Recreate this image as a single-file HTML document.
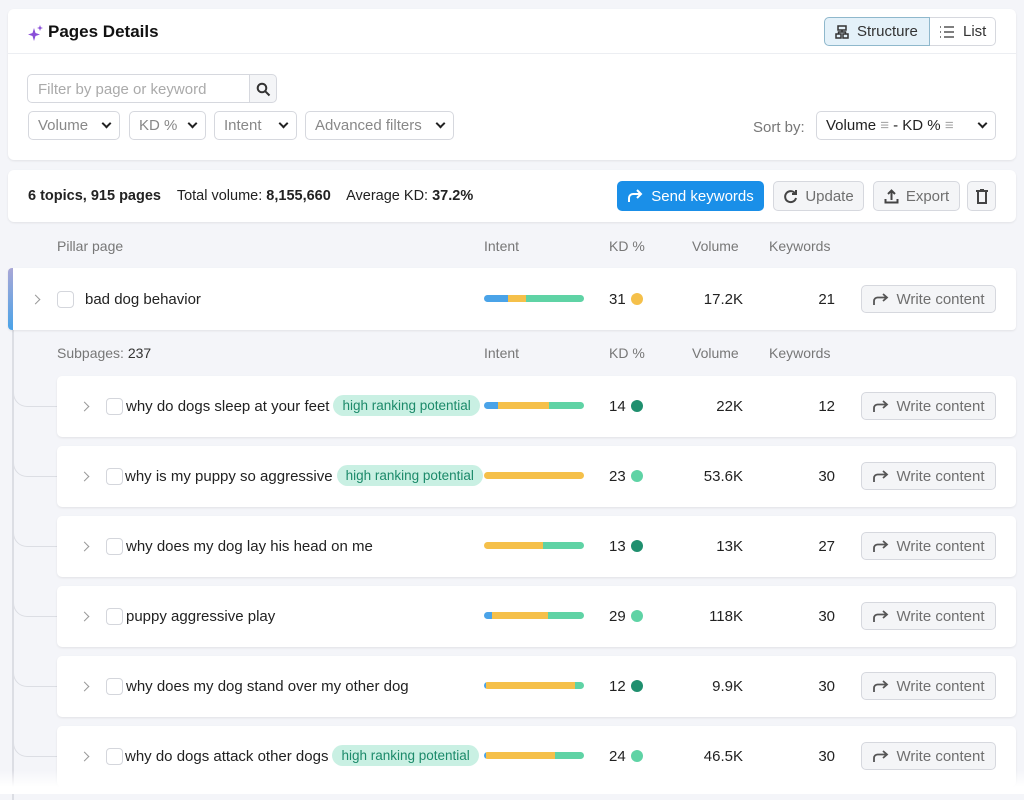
<!DOCTYPE html>
<html><head><meta charset="utf-8"><style>
*{box-sizing:border-box;margin:0;padding:0}
body{width:1024px;height:794px;background:#f4f5f9;font-family:"Liberation Sans",sans-serif;color:#222;position:relative;overflow:hidden;font-size:14px}
.a{position:absolute}
.card{position:absolute;background:#fff;border-radius:6px;box-shadow:0 1px 2px rgba(0,0,0,.08)}
.btn{position:absolute;border:1px solid #d6d8de;border-radius:5px;background:#fff;color:#888;font-size:15px;display:flex;align-items:center;padding:0 9px}
.gbtn{position:absolute;border:1px solid #d6d8de;border-radius:5px;background:#f4f5f7;color:#6f6f6f;font-size:15px;display:flex;align-items:center;justify-content:center;gap:7px}
.chev{width:7px;height:7px;border-right:2px solid #222;border-bottom:2px solid #222;transform:rotate(45deg);margin-left:auto;margin-top:-4px}
.hd{position:absolute;color:#777;font-size:14px}
.row{position:absolute;left:57px;width:959px;height:61px;background:#fff;border-radius:5px;box-shadow:0 1px 2px rgba(0,0,0,.08)}
.arrow{position:absolute;width:7px;height:7px;border-right:1.5px solid #999;border-top:1.5px solid #999;transform:rotate(45deg)}
.cb{position:absolute;width:17px;height:17px;border:1px solid #d4d6dc;border-radius:4px;background:#fff}
.t{position:absolute;font-size:15px;color:#222;white-space:nowrap}
.tag{background:#c9f0e3;color:#1c8a6a;font-size:13.5px;border-radius:11px;padding:3px 9px;margin-left:4px;vertical-align:1px}
.bar{position:absolute;left:427px;width:100px;height:7px;border-radius:4px;overflow:hidden;display:flex}
.bar i{display:block;height:100%}
.b{background:#4aa3e8}.y{background:#f5c04a}.g{background:#5fd3a5}
.kd{position:absolute;left:552px;font-size:15px}
.dot{position:absolute;left:574px;top:24px;width:12px;height:12px;border-radius:50%}
.vol{position:absolute;right:273px;font-size:15px;text-align:right}
.kw{position:absolute;right:181px;font-size:15px}
.conn{position:absolute;left:13px;width:44px;height:30px;border-left:1.5px solid #dcdee4;border-bottom:1.5px solid #dcdee4;border-bottom-left-radius:14px}
</style></head><body>

<div class="card" style="left:8px;top:9px;width:1008px;height:151px">
  <div class="a" style="left:0;top:44px;width:1008px;height:1px;background:#eceef2"></div>
  <svg class="a" style="left:19px;top:15px" width="18" height="18" viewBox="0 0 18 18"><path d="M7 4 L8.5 9 L13 10.5 L8.5 12 L7 17 L5.5 12 L1 10.5 L5.5 9 Z" fill="#8a4fd8"/><path d="M13 1 L13.8 3.2 L16 4 L13.8 4.8 L13 7 L12.2 4.8 L10 4 L12.2 3.2Z" fill="#8a4fd8"/></svg>
  <div class="a" style="left:40px;top:13px;font-size:17px;font-weight:bold;color:#111">Pages Details</div>
  <div class="a" style="left:816px;top:8px;width:106px;height:29px;background:#e4f1f9;border:1px solid #8fb8cc;border-radius:5px 0 0 5px;display:flex;align-items:center;padding-left:10px;gap:8px;font-size:15px;color:#333">
    <svg width="14" height="14" viewBox="0 0 14 14" fill="none" stroke="#333" stroke-width="1.5"><rect x="3" y="1" width="8" height="4"/><rect x="1" y="9" width="5" height="4"/><rect x="8" y="9" width="5" height="4"/><path d="M7 5v2M3.5 9V7h7v2"/></svg>Structure</div>
  <div class="a" style="left:922px;top:8px;width:66px;height:29px;border:1px solid #d6d8de;border-left:none;border-radius:0 5px 5px 0;display:flex;align-items:center;padding-left:9px;gap:8px;font-size:15px;color:#333">
    <svg width="16" height="12" viewBox="0 0 16 12" stroke="#555" stroke-width="1.4"><path d="M1 1h1M1 6h1M1 11h1M5 1h10M5 6h10M5 11h10"/></svg>List</div>
  <div class="a" style="left:19px;top:65px;width:223px;height:29px;border:1px solid #d6d8de;border-radius:5px 0 0 5px;color:#aaa;font-size:15px;padding:6px 10px">Filter by page or keyword</div>
  <div class="a" style="left:241px;top:65px;width:28px;height:29px;border:1px solid #d6d8de;border-radius:0 5px 5px 0;background:#f4f5f7"><svg style="margin:7px 0 0 6px" width="15" height="15" viewBox="0 0 15 15" fill="none" stroke="#333" stroke-width="2"><circle cx="6" cy="6" r="4.3"/><path d="M9.3 9.3L13.5 13.5"/></svg></div>
  <div class="btn" style="left:20px;top:102px;width:92px;height:29px">Volume<span class="chev"></span></div>
  <div class="btn" style="left:121px;top:102px;width:77px;height:29px">KD %<span class="chev"></span></div>
  <div class="btn" style="left:206px;top:102px;width:83px;height:29px">Intent<span class="chev"></span></div>
  <div class="btn" style="left:297px;top:102px;width:149px;height:29px">Advanced filters<span class="chev"></span></div>
  <div class="a" style="left:745px;top:110px;color:#777;font-size:15px">Sort by:</div>
  <div class="btn" style="left:808px;top:102px;width:180px;height:29px;color:#222">Volume&nbsp;<span style="color:#aaa">&#8801;</span>&nbsp;- KD %&nbsp;<span style="color:#aaa">&#8801;</span><span class="chev"></span></div>
</div>

<div class="card" style="left:8px;top:170px;width:1008px;height:52px">
  <div class="a" style="left:20px;top:18px;font-size:14.5px;white-space:nowrap"><b>6 topics, 915 pages</b>&nbsp;&nbsp;&nbsp; Total volume: <b>8,155,660</b>&nbsp;&nbsp;&nbsp; Average KD: <b>37.2%</b></div>
  <div class="a" style="left:609px;top:11px;width:147px;height:30px;background:#1a8fe8;border-radius:5px;color:#fff;font-size:15px;display:flex;align-items:center;justify-content:center;gap:8px"><svg width="16" height="14" viewBox="0 0 16 14" fill="none" stroke="#fff" stroke-width="2"><path d="M2 13V9a4 4 0 0 1 4-4h8M10 1l4 4-4 4"/></svg>Send keywords</div>
  <div class="gbtn" style="left:765px;top:11px;width:91px;height:30px"><svg width="15" height="15" viewBox="0 0 15 15" fill="none" stroke="#444" stroke-width="2"><path d="M12.5 5A5.5 5.5 0 1 0 13 9"/><path d="M13 1v4H9"/></svg>Update</div>
  <div class="gbtn" style="left:865px;top:11px;width:87px;height:30px"><svg width="15" height="15" viewBox="0 0 15 15" fill="none" stroke="#444" stroke-width="2"><path d="M7.5 11V2M4 5l3.5-3.5L11 5M1.5 10v3.5h12V10"/></svg>Export</div>
  <div class="gbtn" style="left:959px;top:11px;width:29px;height:30px"><svg width="12" height="15" viewBox="0 0 12 15" fill="none" stroke="#444" stroke-width="2"><path d="M0 2h12M4 1h4M2 3v11h8V3"/></svg></div>
</div>

<div class="hd" style="left:57px;top:238px">Pillar page</div>
<div class="hd" style="left:484px;top:238px">Intent</div>
<div class="hd" style="left:609px;top:238px">KD %</div>
<div class="hd" style="left:692px;top:238px">Volume</div>
<div class="hd" style="left:769px;top:238px">Keywords</div>

<div class="a" style="left:12px;top:330px;width:1.5px;height:470px;background:#dcdee4"></div>
<div class="conn" style="top:377px"></div>
<div class="conn" style="top:447px"></div>
<div class="conn" style="top:517px"></div>
<div class="conn" style="top:587px"></div>
<div class="conn" style="top:657px"></div>
<div class="conn" style="top:727px"></div>

<div class="card" style="left:8px;top:268px;width:1008px;height:62px;border-radius:4px;overflow:hidden">
  <div class="a" style="left:0;top:0;width:5px;height:62px;background:linear-gradient(#a9a7d6,#4aa3e8)"></div>
  <div class="arrow" style="left:24px;top:28px"></div>
  <div class="cb" style="left:49px;top:23px"></div>
  <div class="t" style="left:77px;top:23px">bad dog behavior</div>
  <div class="bar" style="left:476px;top:27px"><i class="b" style="width:24px"></i><i class="y" style="width:18px"></i><i class="g" style="flex:1"></i></div>
  <div class="kd" style="left:601px;top:23px">31</div><div class="dot" style="left:623px;top:25px;background:#f5c04a"></div>
  <div class="a" style="right:273px;top:23px;font-size:15px">17.2K</div>
  <div class="a" style="right:181px;top:23px;font-size:15px">21</div>
  <div class="gbtn" style="left:853px;top:17px;width:135px;height:28px"><svg width="17" height="13" viewBox="0 0 17 13" fill="none" stroke="#555" stroke-width="1.8"><path d="M2 12V8a3.5 3.5 0 0 1 3.5-3.5H15M11 1l4 3.5L11 8"/></svg>Write content</div>
</div>

<div class="hd" style="left:57px;top:345px">Subpages: <span style="color:#333">237</span></div>
<div class="hd" style="left:484px;top:345px">Intent</div>
<div class="hd" style="left:609px;top:345px">KD %</div>
<div class="hd" style="left:692px;top:345px">Volume</div>
<div class="hd" style="left:769px;top:345px">Keywords</div>

<div class="row" style="top:376px">
  <div class="arrow" style="left:24px;top:27px"></div><div class="cb" style="left:49px;top:22px"></div>
  <div class="t" style="left:69px;top:22px">why do dogs sleep at your feet<span class="tag">high ranking potential</span></div>
  <div class="bar" style="top:26px"><i class="b" style="width:14px"></i><i class="y" style="width:51px"></i><i class="g" style="flex:1"></i></div>
  <div class="kd" style="top:22px">14</div><div class="dot" style="background:#1f8f6e"></div>
  <div class="vol" style="top:22px">22K</div><div class="kw" style="top:22px">12</div>
  <div class="gbtn" style="left:804px;top:16px;width:135px;height:28px"><svg width="17" height="13" viewBox="0 0 17 13" fill="none" stroke="#555" stroke-width="1.8"><path d="M2 12V8a3.5 3.5 0 0 1 3.5-3.5H15M11 1l4 3.5L11 8"/></svg>Write content</div>
</div>
<div class="row" style="top:446px">
  <div class="arrow" style="left:24px;top:27px"></div><div class="cb" style="left:49px;top:22px"></div>
  <div class="t" style="left:68px;top:22px">why is my puppy so aggressive<span class="tag">high ranking potential</span></div>
  <div class="bar" style="top:26px"><i class="y" style="flex:1"></i></div>
  <div class="kd" style="top:22px">23</div><div class="dot" style="background:#5fd3a5"></div>
  <div class="vol" style="top:22px">53.6K</div><div class="kw" style="top:22px">30</div>
  <div class="gbtn" style="left:804px;top:16px;width:135px;height:28px"><svg width="17" height="13" viewBox="0 0 17 13" fill="none" stroke="#555" stroke-width="1.8"><path d="M2 12V8a3.5 3.5 0 0 1 3.5-3.5H15M11 1l4 3.5L11 8"/></svg>Write content</div>
</div>
<div class="row" style="top:516px">
  <div class="arrow" style="left:24px;top:27px"></div><div class="cb" style="left:49px;top:22px"></div>
  <div class="t" style="left:69px;top:22px">why does my dog lay his head on me</div>
  <div class="bar" style="top:26px"><i class="y" style="width:59px"></i><i class="g" style="flex:1"></i></div>
  <div class="kd" style="top:22px">13</div><div class="dot" style="background:#1f8f6e"></div>
  <div class="vol" style="top:22px">13K</div><div class="kw" style="top:22px">27</div>
  <div class="gbtn" style="left:804px;top:16px;width:135px;height:28px"><svg width="17" height="13" viewBox="0 0 17 13" fill="none" stroke="#555" stroke-width="1.8"><path d="M2 12V8a3.5 3.5 0 0 1 3.5-3.5H15M11 1l4 3.5L11 8"/></svg>Write content</div>
</div>
<div class="row" style="top:586px">
  <div class="arrow" style="left:24px;top:27px"></div><div class="cb" style="left:49px;top:22px"></div>
  <div class="t" style="left:69px;top:22px">puppy aggressive play</div>
  <div class="bar" style="top:26px"><i class="b" style="width:8px"></i><i class="y" style="width:56px"></i><i class="g" style="flex:1"></i></div>
  <div class="kd" style="top:22px">29</div><div class="dot" style="background:#5fd3a5"></div>
  <div class="vol" style="top:22px">118K</div><div class="kw" style="top:22px">30</div>
  <div class="gbtn" style="left:804px;top:16px;width:135px;height:28px"><svg width="17" height="13" viewBox="0 0 17 13" fill="none" stroke="#555" stroke-width="1.8"><path d="M2 12V8a3.5 3.5 0 0 1 3.5-3.5H15M11 1l4 3.5L11 8"/></svg>Write content</div>
</div>
<div class="row" style="top:656px">
  <div class="arrow" style="left:24px;top:27px"></div><div class="cb" style="left:49px;top:22px"></div>
  <div class="t" style="left:69px;top:22px">why does my dog stand over my other dog</div>
  <div class="bar" style="top:26px"><i class="b" style="width:2px"></i><i class="y" style="width:89px"></i><i class="g" style="flex:1"></i></div>
  <div class="kd" style="top:22px">12</div><div class="dot" style="background:#1f8f6e"></div>
  <div class="vol" style="top:22px">9.9K</div><div class="kw" style="top:22px">30</div>
  <div class="gbtn" style="left:804px;top:16px;width:135px;height:28px"><svg width="17" height="13" viewBox="0 0 17 13" fill="none" stroke="#555" stroke-width="1.8"><path d="M2 12V8a3.5 3.5 0 0 1 3.5-3.5H15M11 1l4 3.5L11 8"/></svg>Write content</div>
</div>
<div class="row" style="top:726px">
  <div class="arrow" style="left:24px;top:27px"></div><div class="cb" style="left:49px;top:22px"></div>
  <div class="t" style="left:68px;top:22px">why do dogs attack other dogs<span class="tag">high ranking potential</span></div>
  <div class="bar" style="top:26px"><i class="b" style="width:2px"></i><i class="y" style="width:69px"></i><i class="g" style="flex:1"></i></div>
  <div class="kd" style="top:22px">24</div><div class="dot" style="background:#5fd3a5"></div>
  <div class="vol" style="top:22px">46.5K</div><div class="kw" style="top:22px">30</div>
  <div class="gbtn" style="left:804px;top:16px;width:135px;height:28px"><svg width="17" height="13" viewBox="0 0 17 13" fill="none" stroke="#555" stroke-width="1.8"><path d="M2 12V8a3.5 3.5 0 0 1 3.5-3.5H15M11 1l4 3.5L11 8"/></svg>Write content</div>
</div>
<div class="a" style="left:0;top:770px;width:1024px;height:24px;background:linear-gradient(rgba(255,255,255,0),#fff 70%)"></div>
</body></html>
